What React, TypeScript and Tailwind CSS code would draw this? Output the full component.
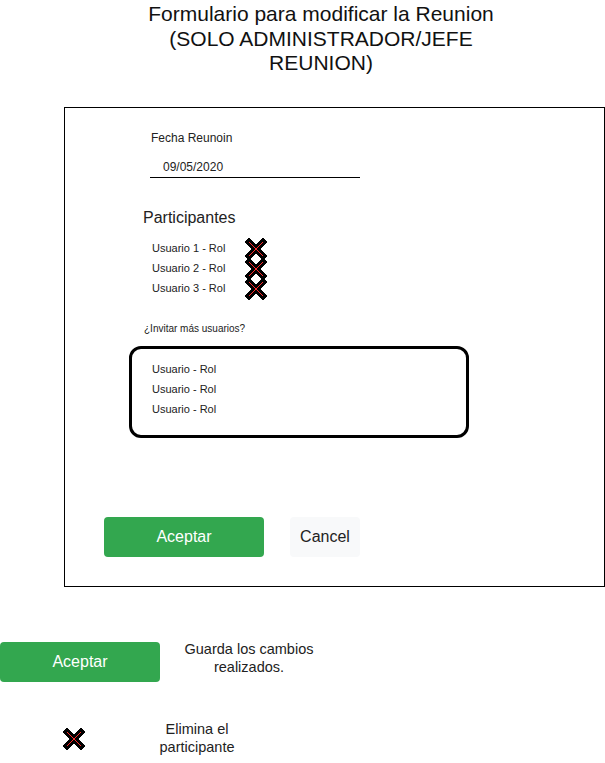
function XIcon() {
  return (
    <svg width="22" height="22" viewBox="0 0 22 22" className="block" shapeRendering="crispEdges">
      <path d="M4 4 L18 18 M18 4 L4 18" stroke="#000" strokeWidth="6" strokeLinecap="square" />
      <path d="M4 4 L18 18 M18 4 L4 18" stroke="#ff2a2a" strokeWidth="1" shapeRendering="auto" />
    </svg>
  )
}

export default function App() {
  const font = { fontFamily: '"Liberation Sans", Arial, sans-serif' }
  return (
    <div className="relative h-[763px] w-[605px] overflow-hidden bg-white text-[#222]" style={font}>
      <div className="ml-[136px] w-[370px] pt-[2px] text-center text-[21px] leading-[24.5px] text-[#111]">
        Formulario para modificar la Reunion (SOLO ADMINISTRADOR/JEFE REUNION)
      </div>

      <div className="ml-[64px] mt-[31px] h-[480px] w-[541px] border border-black">
        <div className="pl-[86px] pt-[22px] text-[12px] leading-[16px]">Fecha Reunoin</div>
        <div className="ml-[85px] mt-[13px] w-[210px] border-b border-black pb-[2px] pl-[13px] text-[12px] leading-[16px]">
          09/05/2020
        </div>

        <div className="ml-[78px] mt-[30px] text-[16px] leading-[20px]">Participantes</div>
        <div className="ml-[87px] mt-[11px] flex flex-col">
          {[1, 2, 3].map((n) => (
            <div key={n} className="flex h-[20px] items-center">
              <span className="w-[93px] text-[11px]">Usuario {n} - Rol</span>
              <XIcon />
            </div>
          ))}
        </div>

        <div className="ml-[79px] mt-[23px] text-[10px] leading-[14px]">¿Invitar más usuarios?</div>
        <div className="ml-[64px] mt-[10px] h-[92px] w-[340px] rounded-[12px] border-[3px] border-black pl-[20px] pt-[10px]">
          {[0, 1, 2].map((i) => (
            <div key={i} className="h-[20px] text-[11px] leading-[20px]">
              Usuario - Rol
            </div>
          ))}
        </div>

        <div className="ml-[39px] mt-[79px] flex gap-[26px]">
          <div className="flex h-[40px] w-[160px] items-center justify-center rounded-[4px] bg-[#33a74f] text-[16px] text-white">
            Aceptar
          </div>
          <div className="flex h-[40px] w-[70px] items-center justify-center rounded-[4px] bg-[#f8f9fa] text-[16px] text-[#222]">
            Cancel
          </div>
        </div>
      </div>

      <div className="mt-[55px] flex items-start">
        <div className="flex h-[40px] w-[160px] items-center justify-center rounded-[4px] bg-[#33a74f] text-[16px] text-white">
          Aceptar
        </div>
        <div className="-mt-[2px] ml-[16px] w-[146px] text-center text-[14.5px] leading-[18px]">
          Guarda los cambios realizados.
        </div>
      </div>

      <div className="mt-[38px] flex items-start">
        <div className="ml-[63px] mt-[8px]">
          <XIcon />
        </div>
        <div className="ml-[62px] w-[100px] text-center text-[14.5px] leading-[18px]">Elimina el participante</div>
      </div>
    </div>
  )
}
